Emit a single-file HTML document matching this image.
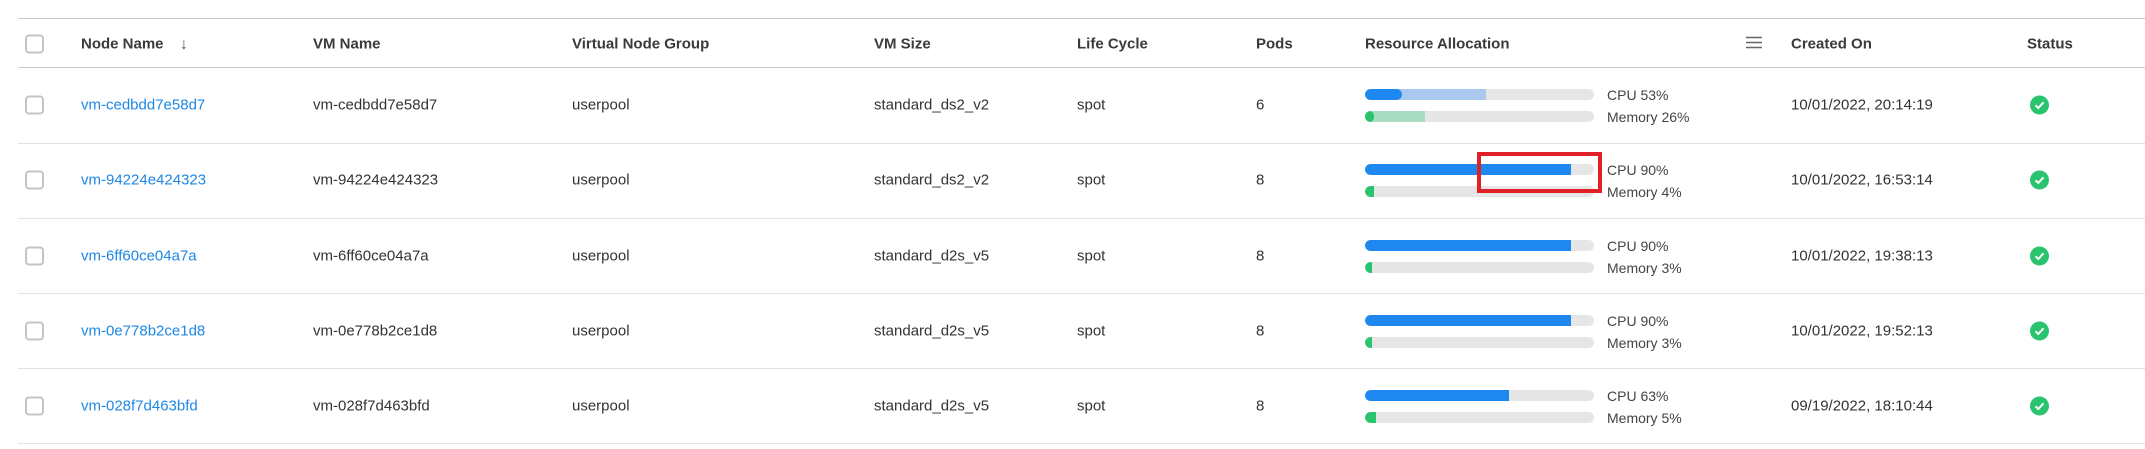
<!DOCTYPE html>
<html><head><meta charset="utf-8"><style>
*{margin:0;padding:0;box-sizing:border-box}
body{width:2145px;height:449px;background:#fff;position:relative;overflow:hidden;font-family:"Liberation Sans",sans-serif;color:#333;font-size:15px}
.l{position:absolute;left:18px;right:0;height:1px}
.t{position:absolute;white-space:nowrap;transform:translateY(-50%)}
.h{font-weight:bold;font-size:15px;color:#3a3a3a}
.cb{position:absolute;left:25px;width:19px;height:19px;border:2px solid #c4c4c4;border-radius:4px;transform:translateY(-50%)}
.a{color:#1e88e5}
.bar{position:absolute;left:1365px;width:229px;height:11px;border-radius:6px;background:#e6e6e6;overflow:hidden}
.bar div{position:absolute;left:0;top:0;bottom:0;border-radius:6px 0 0 6px}
.st{position:absolute;left:2030px;width:19px;height:19px;border-radius:50%;background:#2bc46e;transform:translateY(-50%)}
.st svg{position:absolute;left:0;top:0}
.s{font-size:14px;color:#444}
</style></head><body>
<div class="l" style="top:18px;background:#c8c8c8"></div>
<div class="l" style="top:67px;background:#c8c8c8"></div>
<div class="l" style="top:143px;background:#e2e2e2"></div>
<div class="l" style="top:218px;background:#e2e2e2"></div>
<div class="l" style="top:293px;background:#e2e2e2"></div>
<div class="l" style="top:368px;background:#e2e2e2"></div>
<div class="l" style="top:443px;background:#e2e2e2"></div>

<div class="cb" style="top:44px"></div>
<div class="t h" style="left:81px;top:44px">Node Name</div>
<div class="t" style="left:180px;top:45px;font-size:16px;color:#555">↓</div>
<div class="t h" style="left:313px;top:44px">VM Name</div>
<div class="t h" style="left:572px;top:44px">Virtual Node Group</div>
<div class="t h" style="left:874px;top:44px">VM Size</div>
<div class="t h" style="left:1077px;top:44px">Life Cycle</div>
<div class="t h" style="left:1256px;top:44px">Pods</div>
<div class="t h" style="left:1365px;top:44px">Resource Allocation</div>
<svg style="position:absolute;left:1746px;top:36px" width="16" height="14"><path d="M0 1.5H16M0 6.5H16M0 11.5H16" stroke="#666" stroke-width="1.6"/></svg>
<div class="t h" style="left:1791px;top:44px">Created On</div>
<div class="t h" style="left:2027px;top:44px">Status</div>

<!-- rows -->
<div id="rows"></div>
<!-- row 1 -->
<div class="cb" style="top:105px"></div>
<div class="t a" style="left:81px;top:105px">vm-cedbdd7e58d7</div>
<div class="t" style="left:313px;top:105px">vm-cedbdd7e58d7</div>
<div class="t" style="left:572px;top:105px">userpool</div>
<div class="t" style="left:874px;top:105px">standard_ds2_v2</div>
<div class="t" style="left:1077px;top:105px">spot</div>
<div class="t" style="left:1256px;top:105px">6</div>
<div class="bar" style="top:89px"><div style="width:53%;background:#abc9ee"></div><div style="width:16%;background:#1e88f0;border-radius:6px"></div></div>
<div class="bar" style="top:111px"><div style="width:26%;background:#aadcc4"></div><div style="width:4%;background:#2bc46e;border-radius:6px"></div></div>
<div class="t s" style="left:1607px;top:95px">CPU 53%</div>
<div class="t s" style="left:1607px;top:117px">Memory 26%</div>
<div class="t" style="left:1791px;top:105px">10/01/2022, 20:14:19</div>
<div class="st" style="top:105px"><svg width="19" height="19"><path d="M5.5 9.8L8.3 12.5L13.5 6.8" fill="none" stroke="#fff" stroke-width="2"/></svg></div>

<!-- row 2 -->
<div class="cb" style="top:180px"></div>
<div class="t a" style="left:81px;top:180px">vm-94224e424323</div>
<div class="t" style="left:313px;top:180px">vm-94224e424323</div>
<div class="t" style="left:572px;top:180px">userpool</div>
<div class="t" style="left:874px;top:180px">standard_ds2_v2</div>
<div class="t" style="left:1077px;top:180px">spot</div>
<div class="t" style="left:1256px;top:180px">8</div>
<div class="bar" style="top:164px"><div style="width:90%;background:#1e88f0"></div></div>
<div class="bar" style="top:186px"><div style="width:4%;background:#2bc46e"></div></div>
<div class="t s" style="left:1607px;top:170px">CPU 90%</div>
<div class="t s" style="left:1607px;top:192px">Memory 4%</div>
<div class="t" style="left:1791px;top:180px">10/01/2022, 16:53:14</div>
<div class="st" style="top:180px"><svg width="19" height="19"><path d="M5.5 9.8L8.3 12.5L13.5 6.8" fill="none" stroke="#fff" stroke-width="2"/></svg></div>
<div style="position:absolute;left:1477px;top:152px;width:125px;height:41px;border:4px solid #e02027"></div>

<!-- row 3 -->
<div class="cb" style="top:256px"></div>
<div class="t a" style="left:81px;top:256px">vm-6ff60ce04a7a</div>
<div class="t" style="left:313px;top:256px">vm-6ff60ce04a7a</div>
<div class="t" style="left:572px;top:256px">userpool</div>
<div class="t" style="left:874px;top:256px">standard_d2s_v5</div>
<div class="t" style="left:1077px;top:256px">spot</div>
<div class="t" style="left:1256px;top:256px">8</div>
<div class="bar" style="top:240px"><div style="width:90%;background:#1e88f0"></div></div>
<div class="bar" style="top:262px"><div style="width:3%;background:#2bc46e"></div></div>
<div class="t s" style="left:1607px;top:246px">CPU 90%</div>
<div class="t s" style="left:1607px;top:268px">Memory 3%</div>
<div class="t" style="left:1791px;top:256px">10/01/2022, 19:38:13</div>
<div class="st" style="top:256px"><svg width="19" height="19"><path d="M5.5 9.8L8.3 12.5L13.5 6.8" fill="none" stroke="#fff" stroke-width="2"/></svg></div>

<!-- row 4 -->
<div class="cb" style="top:331px"></div>
<div class="t a" style="left:81px;top:331px">vm-0e778b2ce1d8</div>
<div class="t" style="left:313px;top:331px">vm-0e778b2ce1d8</div>
<div class="t" style="left:572px;top:331px">userpool</div>
<div class="t" style="left:874px;top:331px">standard_d2s_v5</div>
<div class="t" style="left:1077px;top:331px">spot</div>
<div class="t" style="left:1256px;top:331px">8</div>
<div class="bar" style="top:315px"><div style="width:90%;background:#1e88f0"></div></div>
<div class="bar" style="top:337px"><div style="width:3%;background:#2bc46e"></div></div>
<div class="t s" style="left:1607px;top:321px">CPU 90%</div>
<div class="t s" style="left:1607px;top:343px">Memory 3%</div>
<div class="t" style="left:1791px;top:331px">10/01/2022, 19:52:13</div>
<div class="st" style="top:331px"><svg width="19" height="19"><path d="M5.5 9.8L8.3 12.5L13.5 6.8" fill="none" stroke="#fff" stroke-width="2"/></svg></div>

<!-- row 5 -->
<div class="cb" style="top:406px"></div>
<div class="t a" style="left:81px;top:406px">vm-028f7d463bfd</div>
<div class="t" style="left:313px;top:406px">vm-028f7d463bfd</div>
<div class="t" style="left:572px;top:406px">userpool</div>
<div class="t" style="left:874px;top:406px">standard_d2s_v5</div>
<div class="t" style="left:1077px;top:406px">spot</div>
<div class="t" style="left:1256px;top:406px">8</div>
<div class="bar" style="top:390px"><div style="width:63%;background:#1e88f0"></div></div>
<div class="bar" style="top:412px"><div style="width:5%;background:#2bc46e"></div></div>
<div class="t s" style="left:1607px;top:396px">CPU 63%</div>
<div class="t s" style="left:1607px;top:418px">Memory 5%</div>
<div class="t" style="left:1791px;top:406px">09/19/2022, 18:10:44</div>
<div class="st" style="top:406px"><svg width="19" height="19"><path d="M5.5 9.8L8.3 12.5L13.5 6.8" fill="none" stroke="#fff" stroke-width="2"/></svg></div>
</body></html>
